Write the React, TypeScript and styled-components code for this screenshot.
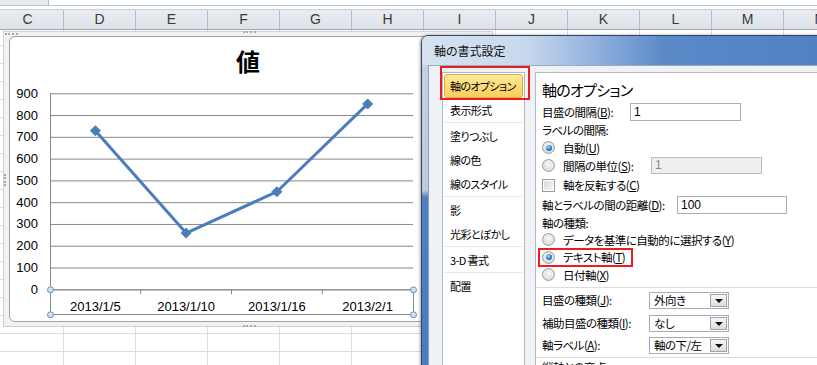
import React from "react";
import styled, { createGlobalStyle, css } from "styled-components";

const GlobalStyle = createGlobalStyle`
  html, body { margin: 0; padding: 0; background: #ffffff; }
  body { font-family: "Noto Sans CJK JP", "Liberation Sans", sans-serif; }
  #root { width: 817px; height: 365px; }
`;

const Screen = styled.div`
  position: relative;
  width: 817px;
  height: 365px;
  overflow: hidden;
  display: flex;
  flex-direction: column;
  background: #fff;
`;

const TopStrip = styled.div`
  height: 5px;
  display: flex;
  border-bottom: 1px solid #bfc5cc;
  flex-shrink: 0;
`;

const NameBox = styled.div`
  width: 48px;
  background: #e8ebee;
  border-right: 1px solid #b5bcc4;
`;

const HeaderRow = styled.div`
  margin-top: 3px;
  height: 21px;
  box-sizing: border-box;
  border-top: 1px solid #c9ced4;
  border-bottom: 1px solid #9da7b3;
  background: linear-gradient(#e9edf1, #dde2e8);
  display: flex;
  flex-shrink: 0;
`;

const HeaderCells = styled.div`
  display: flex;
  margin-left: -8px;
`;

const HeaderCell = styled.div`
  width: 72px;
  flex-shrink: 0;
  box-sizing: border-box;
  border-right: 1px solid #b6bdc6;
  text-align: center;
  font-family: "Liberation Sans", Arial, sans-serif;
  font-size: 14px;
  line-height: 19px;
  color: #3a3a3a;
  overflow: hidden;
`;

const Sheet = styled.div`
  position: relative;
  flex: 1;
  background-color: #fff;
  background-image:
    linear-gradient(to right, transparent 71px, #dadcdd 71px),
    linear-gradient(to bottom, transparent 17px, #dadcdd 17px);
  background-size: 72px 100%, 100% 18px;
  background-position: -8px 0, 0 16px;
`;

/* ---------- Chart ---------- */

const ChartFrame = styled.div`
  position: absolute;
  left: 3px;
  top: 1px;
  width: 490px;
  height: 296px;
  box-sizing: border-box;
  border: 1px solid #cfcfcf;
  background: #f1f1f1;
  padding: 4px 5px;
`;

const Grip = styled.span<{ $vertical?: boolean }>`
  position: absolute;
  ${(p) =>
    p.$vertical
      ? css`
          width: 0;
          height: 12px;
          border-left: 2px dotted #a9a9a9;
        `
      : css`
          height: 0;
          width: 13px;
          border-top: 2px dotted #a9a9a9;
        `}
`;

const ChartArea = styled.div`
  width: 478px;
  height: 286px;
  box-sizing: border-box;
  border: 1px solid #a3a3a3;
  border-radius: 6px;
  background: #fff;
`;

const ChartTitle = styled.div`
  height: 48px;
  line-height: 48px;
  text-align: center;
  font-family: "Noto Sans CJK JP", sans-serif;
  font-weight: 700;
  font-size: 24px;
  color: #000;
`;

const PlotSvg = styled.svg`
  display: block;
`;

/* ---------- Dialog ---------- */

const DialogWindow = styled.div`
  position: absolute;
  left: 421px;
  top: 5px;
  width: 420px;
  height: 345px;
  box-sizing: border-box;
  border: 1px solid #34475e;
  border-radius: 7px 7px 0 0;
  background: linear-gradient(to bottom, #c4d2e3 0, #bccadc 45%, #4d80c0 47%, #4a7dbd 100%);
  box-shadow: -1px 0 3px rgba(0, 0, 0, 0.35);
  display: flex;
  flex-direction: column;
  overflow: hidden;
`;

const TitleBar = styled.div`
  height: 29px;
  flex-shrink: 0;
  box-sizing: border-box;
  padding-left: 12px;
  display: flex;
  align-items: center;
  background: linear-gradient(90deg, #d6e2f1 0%, #c8d8ec 25%, #8fb0dd 42%, #5b89c8 58%, #4f80c3 100%);
  font-size: 12px;
  color: #111;
  font-feature-settings: "palt";
`;

const ClientArea = styled.div`
  flex: 1;
  margin-left: 6px;
  background: #eef1f5;
  border-left: 1px solid #8f9fb3;
  border-top: 1px solid #9aabc0;
  display: flex;
  gap: 10px;
  padding: 6px 0 0 13px;
  color: #000;
  font-feature-settings: "palt";
`;

const NavList = styled.div`
  width: 83px;
  flex-shrink: 0;
  box-sizing: border-box;
  border: 1px solid #b4b7bb;
  border-bottom: none;
  background: #fff;
  padding: 1px 1px 0;
  display: flex;
  flex-direction: column;
  font-size: 11px;
  letter-spacing: -0.6px;
`;

const NavItem = styled.div<{ $selected?: boolean; $marked?: boolean }>`
  position: relative;
  height: 24px;
  line-height: 24px;
  box-sizing: border-box;
  padding-left: 6px;
  white-space: nowrap;
  ${(p) =>
    p.$selected &&
    css`
      border: 1px solid #d9ac3e;
      border-radius: 3px;
      background: linear-gradient(#fdeb9e, #fbdb76 50%, #f8cf5c);
      line-height: 22px;
      padding-left: 5px;
    `}
  ${(p) =>
    p.$marked &&
    css`
      &::after {
        content: "";
        position: absolute;
        left: -5px;
        top: -9px;
        right: -8px;
        bottom: -3px;
        border: 2px solid #ea1c24;
      }
    `}
`;

const NavSep = styled.div`
  height: 2px;
  background: linear-gradient(#e6e6e6 0, #e6e6e6 1px, transparent 1px);
`;

const Panel = styled.div`
  flex: 1;
  box-sizing: border-box;
  border: 1px solid #b4b7bb;
  border-bottom: none;
  background: #fff;
  padding: 3px 0 0 6px;
  display: flex;
  flex-direction: column;
  white-space: nowrap;
  font-size: 11.5px;
  letter-spacing: -0.5px;
`;

const Heading = styled.div`
  height: 27px;
  line-height: 27px;
  font-size: 15px;
  letter-spacing: -0.7px;
  color: #000;
`;

const Row = styled.div<{ $h: number; $mt?: number }>`
  height: ${(p) => p.$h}px;
  margin-top: ${(p) => p.$mt ?? 0}px;
  display: flex;
  align-items: center;
  flex-shrink: 0;
`;

const Label = styled.span<{ $w?: number }>`
  display: inline-block;
  width: ${(p) => (p.$w ? `${p.$w}px` : "auto")};
  flex-shrink: 0;
`;

const TextBox = styled.div<{ $w: number; $h: number; $disabled?: boolean }>`
  width: ${(p) => p.$w}px;
  height: ${(p) => p.$h}px;
  box-sizing: border-box;
  border: 1px solid ${(p) => (p.$disabled ? "#b7bcc2" : "#a9aeb5")};
  background: ${(p) => (p.$disabled ? "#efefef" : "#fff")};
  color: ${(p) => (p.$disabled ? "#8a8a8a" : "#000")};
  padding-left: 3px;
  font-family: "Liberation Sans", Arial, sans-serif;
  font-size: 12px;
  letter-spacing: 0;
  line-height: ${(p) => p.$h - 2}px;
`;

const Radio = styled.span<{ $checked?: boolean }>`
  position: relative;
  width: 13px;
  height: 13px;
  box-sizing: border-box;
  border-radius: 50%;
  border: 1px solid #9a9c9e;
  background: radial-gradient(circle at 50% 40%, #fafafa 0, #e3e3e3 55%, #cfcfcf 100%);
  margin-right: 8px;
  flex-shrink: 0;
  ${(p) =>
    p.$checked &&
    css`
      &::after {
        content: "";
        position: absolute;
        left: 2.5px;
        top: 2.5px;
        width: 6px;
        height: 6px;
        border-radius: 50%;
        background: radial-gradient(circle at 40% 35%, #a8e2ff 0, #2c8fd6 45%, #0a4a80 100%);
      }
    `}
`;

const Check = styled.span`
  width: 13px;
  height: 13px;
  box-sizing: border-box;
  border: 1px solid #9a9c9e;
  background: linear-gradient(135deg, #d9d9d9, #f7f7f7);
  box-shadow: inset 0 0 0 1px #fff;
  margin-right: 8px;
  flex-shrink: 0;
`;

const Marked = styled.span`
  position: relative;
  display: inline-flex;
  align-items: center;
  &::after {
    content: "";
    position: absolute;
    left: -4px;
    top: -1px;
    width: 95px;
    bottom: -2px;
    border: 2px solid #ea1c24;
    box-sizing: border-box;
  }
`;

const Divider = styled.div<{ $mt: number; $mb: number }>`
  height: 1px;
  background: #dcdcdc;
  margin: ${(p) => p.$mt}px 0 ${(p) => p.$mb}px -6px;
  flex-shrink: 0;
`;

const Select = styled.div`
  width: 80px;
  height: 17px;
  box-sizing: border-box;
  border: 1px solid #a5acb5;
  background: #fff;
  display: flex;
  align-items: center;
  padding-left: 4px;
  justify-content: space-between;
  padding-right: 1px;
`;

const SelectText = styled.span`
  line-height: 15px;
`;

const DropButton = styled.span`
  width: 17px;
  height: 13px;
  box-sizing: border-box;
  border: 1px solid #9ea3a9;
  background: linear-gradient(#f7f7f7, #dcdcdc);
  display: flex;
  align-items: center;
  justify-content: center;
  &::after {
    content: "";
    width: 0;
    height: 0;
    border-left: 4px solid transparent;
    border-right: 4px solid transparent;
    border-top: 4px solid #111;
    margin-top: 1px;
  }
`;

const Key: React.FC<{ k: string }> = ({ k }) => (
  <>
    (<u>{k}</u>)
  </>
);

/* ---------- Chart drawing ---------- */

const X0 = 40;
const X1 = 403;
const Y0 = 204.3;
const yOf = (v: number) => Y0 - v * 0.2178;
const cats = ["2013/1/5", "2013/1/10", "2013/1/16", "2013/2/1"];
const vals = [728, 258, 448, 851];
const cw = (X1 - X0) / cats.length;
const cx = (i: number) => X0 + cw * (i + 0.5);

const LineChart: React.FC = () => {
  const ticks = [900, 800, 700, 600, 500, 400, 300, 200, 100, 0];
  const pts = vals.map((v, i) => `${cx(i)},${yOf(v)}`).join(" ");
  return (
    <PlotSvg width={476} height={236} viewBox="0 0 476 236">
      {ticks.map((t) => (
        <g key={t}>
          <line x1={X0} x2={X1} y1={yOf(t) + 0.5} y2={yOf(t) + 0.5} stroke="#878787" strokeWidth={1} />
          <text
            x={28}
            y={yOf(t) + 4.5}
            textAnchor="end"
            fontFamily="Liberation Sans, Arial, sans-serif"
            fontSize={13}
            fill="#000"
          >
            {t}
          </text>
        </g>
      ))}
      <line x1={X0 + 0.5} x2={X0 + 0.5} y1={yOf(900)} y2={Y0} stroke="#878787" />
      {[1, 2, 3].map((i) => (
        <line key={i} x1={X0 + cw * i} x2={X0 + cw * i} y1={Y0} y2={Y0 + 5} stroke="#878787" />
      ))}
      {cats.map((c, i) => (
        <text
          key={c}
          x={cx(i)}
          y={Y0 + 22}
          textAnchor="middle"
          fontFamily="Liberation Sans, Arial, sans-serif"
          fontSize={13}
          fill="#000"
        >
          {c}
        </text>
      ))}
      <rect x={X0 + 0.5} y={Y0 + 0.5} width={X1 - X0} height={24.7} fill="none" stroke="#8c8c8c" />
      {[
        [X0, Y0],
        [X1, Y0],
        [X0, Y0 + 25],
        [X1, Y0 + 25],
      ].map(([x, y], i) => (
        <circle key={i} cx={x + 0.5} cy={y + 0.5} r={3} fill="#d4e0ee" stroke="#6f8fb4" strokeWidth={1} />
      ))}
      <polyline points={pts} fill="none" stroke="#4a7ebb" strokeWidth={3} strokeLinejoin="round" />
      {vals.map((v, i) => {
        const x = cx(i);
        const y = yOf(v);
        const s = 5;
        return (
          <polygon
            key={i}
            points={`${x},${y - s} ${x + s},${y} ${x},${y + s} ${x - s},${y}`}
            fill="#4a7ebb"
            stroke="#4a7ebb"
          />
        );
      })}
    </PlotSvg>
  );
};

const navItems: { label: string; sepAfter?: boolean }[] = [
  { label: "軸のオプション" },
  { label: "表示形式", sepAfter: true },
  { label: "塗りつぶし" },
  { label: "線の色" },
  { label: "線のスタイル", sepAfter: true },
  { label: "影" },
  { label: "光彩とぼかし", sepAfter: true },
  { label: "3-D 書式", sepAfter: true },
  { label: "配置" },
];

export default function App() {
  return (
    <>
      <GlobalStyle />
      <Screen>
        <TopStrip>
          <NameBox />
        </TopStrip>
        <HeaderRow>
          <HeaderCells>
            {"CDEFGHIJKLMN".split("").map((c) => (
              <HeaderCell key={c}>{c}</HeaderCell>
            ))}
          </HeaderCells>
        </HeaderRow>
        <Sheet>
          <ChartFrame>
            <Grip style={{ left: 1, top: 1 }} />
            <Grip style={{ left: 239, top: -1 }} />
            <Grip style={{ left: 239, bottom: -1 }} />
            <Grip $vertical style={{ left: 0, top: 142 }} />
            <ChartArea>
              <ChartTitle>値</ChartTitle>
              <LineChart />
            </ChartArea>
          </ChartFrame>

          <DialogWindow>
            <TitleBar>軸の書式設定</TitleBar>
            <ClientArea>
              <NavList>
                {navItems.map((n, i) => (
                  <React.Fragment key={n.label}>
                    <NavItem $selected={i === 0} $marked={i === 0}>
                      {n.label}
                    </NavItem>
                    {n.sepAfter && <NavSep />}
                  </React.Fragment>
                ))}
              </NavList>
              <Panel>
                <Heading>軸のオプション</Heading>
                <Row $h={18}>
                  <Label $w={88}>
                    目盛の間隔<Key k="B" />:
                  </Label>
                  <TextBox $w={111} $h={18}>1</TextBox>
                </Row>
                <Row $h={18}>
                  <Label>ラベルの間隔:</Label>
                </Row>
                <Row $h={17}>
                  <Radio $checked />
                  <Label>
                    自動<Key k="U" />
                  </Label>
                </Row>
                <Row $h={19}>
                  <Radio />
                  <Label $w={88}>
                    間隔の単位<Key k="S" />:
                  </Label>
                  <TextBox $w={111} $h={17} $disabled>
                    1
                  </TextBox>
                </Row>
                <Row $h={20}>
                  <Check />
                  <Label>
                    軸を反転する<Key k="C" />
                  </Label>
                </Row>
                <Row $h={20}>
                  <Label $w={135}>
                    軸とラベルの間の距離<Key k="D" />:
                  </Label>
                  <TextBox $w={110} $h={18}>100</TextBox>
                </Row>
                <Row $h={16}>
                  <Label>軸の種類:</Label>
                </Row>
                <Row $h={17}>
                  <Radio />
                  <Label>
                    データを基準に自動的に選択する<Key k="Y" />
                  </Label>
                </Row>
                <Row $h={18}>
                  <Marked>
                    <Radio $checked />
                    <Label>
                      テキスト軸<Key k="T" />
                    </Label>
                  </Marked>
                </Row>
                <Row $h={17}>
                  <Radio />
                  <Label>
                    日付軸<Key k="X" />
                  </Label>
                </Row>
                <Divider $mt={4} $mb={3} />
                <Row $h={18}>
                  <Label $w={107}>
                    目盛の種類<Key k="J" />:
                  </Label>
                  <Select>
                    <SelectText>外向き</SelectText>
                    <DropButton />
                  </Select>
                </Row>
                <Row $h={18} $mt={5}>
                  <Label $w={107}>
                    補助目盛の種類<Key k="I" />:
                  </Label>
                  <Select>
                    <SelectText>なし</SelectText>
                    <DropButton />
                  </Select>
                </Row>
                <Row $h={18} $mt={4}>
                  <Label $w={107}>
                    軸ラベル<Key k="A" />:
                  </Label>
                  <Select>
                    <SelectText>軸の下/左</SelectText>
                    <DropButton />
                  </Select>
                </Row>
                <Divider $mt={3} $mb={0} />
                <Row $h={18}>
                  <Label>縦軸との交点:</Label>
                </Row>
              </Panel>
            </ClientArea>
          </DialogWindow>
        </Sheet>
      </Screen>
    </>
  );
}
